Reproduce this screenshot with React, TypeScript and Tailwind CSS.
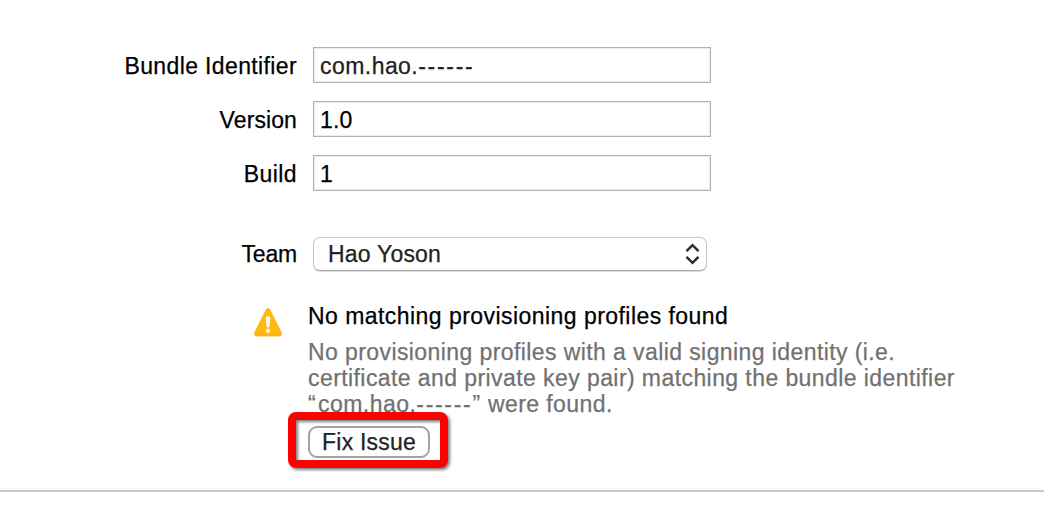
import React from 'react';

type FieldRowProps = {
  label: string;
  labelClass: string;
  children: React.ReactNode;
};

const FieldRow: React.FC<FieldRowProps> = ({ label, labelClass, children }) => (
  <div className="flex h-9 gap-4">
    <div className={`w-[297px] pt-[3px] text-right whitespace-nowrap leading-8 ${labelClass}`}>
      {label}
    </div>
    <div className="w-[398px] border border-[#b1b1b1] bg-white pt-[2px] pl-[6px] leading-8 shadow-[inset_0_0_0_1px_#ececec]">
      {children}
    </div>
  </div>
);

const BundleId = () => (
  <>
    <span className="tracking-[0.45px]">com.hao.</span>
    <span className="tracking-[1.7px]">------</span>
  </>
);

const WarningIcon = () => (
  <svg width="28" height="29" viewBox="0 0 28 29">
    <path
      d="M12 1.9C12.9 .2 15.1 .2 16 1.9L27.3 24.5C28.2 26.5 27.2 28 25.3 28H2.7C.8 28-.2 26.5.7 24.5Z"
      fill="#ffb90f"
      stroke="#f9a90a"
      strokeWidth=".7"
    />
    <path d="M11.8 10C11.8 7.8 16.2 7.8 16.2 10L15.5 18.2C15.3 19.8 12.7 19.8 12.5 18.2Z" fill="#fff" />
    <circle cx="14" cy="22.9" r="2.1" fill="#fff" />
  </svg>
);

export default function App() {
  return (
    <div className="h-[516px] w-[1044px] overflow-hidden bg-white pt-[47px] font-['Liberation_Sans',Arial,sans-serif] text-[23px] text-black [-webkit-text-stroke:0.25px]">
      <div className="flex flex-col gap-[18px]">
        <FieldRow label="Bundle Identifier" labelClass="tracking-[0.37px]">
          <span className="text-[#222]">
            <BundleId />
          </span>
        </FieldRow>
        <FieldRow label="Version" labelClass="tracking-[0.1px]">
          <span className="tracking-[0.2px]">1.0</span>
        </FieldRow>
        <FieldRow label="Build" labelClass="tracking-[0.4px]">
          1
        </FieldRow>
      </div>

      <div className="mt-[46px] flex h-[34px] gap-4">
        <div className="w-[297px] pt-[1px] text-right leading-8 tracking-[-0.2px]">Team</div>
        <div className="flex w-[394px] items-center justify-between rounded-[7px] border border-[#c6c6c6] border-b-[#a9a9a9] bg-white pr-[6px] pl-[14px] shadow-[0_1px_1px_rgba(0,0,0,0.15)]">
          <span className="leading-8 tracking-[0.2px] text-[#222]">Hao Yoson</span>
          <svg width="15" height="22" viewBox="0 0 15 22" fill="none" stroke="#2b2b2b" strokeWidth="2.4">
            <path d="M1.5 8.2 7.5 2.2 13.5 8.2M1.5 13.8 7.5 19.8 13.5 13.8" />
          </svg>
        </div>
      </div>

      <div className="mt-8 flex">
        <div className="mt-[5px] ml-[254px] w-[54px]">
          <WarningIcon />
        </div>
        <div className="whitespace-nowrap">
          <div className="h-9 leading-[26px] tracking-[0.45px]">
            No matching provisioning profiles found
          </div>
          <div className="leading-[26px] text-[#717171]">
            <div className="tracking-[0.41px]">No provisioning profiles with a valid signing identity (i.e.</div>
            <div className="tracking-[0.42px]">certificate and private key pair) matching the bundle identifier</div>
            <div className="tracking-[0.4px]">
              <span className="tracking-[2.4px]">“</span>
              <BundleId />
              <span className="tracking-[1.2px]">”</span> were found.
            </div>
          </div>
          <div className="relative mt-[9px] h-8 w-[122px]">
            <button
              type="button"
              className="block h-8 w-[122px] rounded-[9px] border-2 border-[#a3a3a3] bg-white leading-7 tracking-[0.2px] text-[#222]"
            >
              Fix Issue
            </button>
            {/* callout around the button */}
            <div className="pointer-events-none absolute -top-[14px] -left-[20px] h-14 w-40 rounded-[8px] border-8 border-[#fe0000] drop-shadow-[2px_2px_1.5px_rgba(0,0,0,0.5)]" />
          </div>
        </div>
      </div>

      <div className="mt-[30px] h-1 border-t-2 border-b-2 border-t-[#fafafa] border-b-[#c8c8c8]" />
    </div>
  );
}
